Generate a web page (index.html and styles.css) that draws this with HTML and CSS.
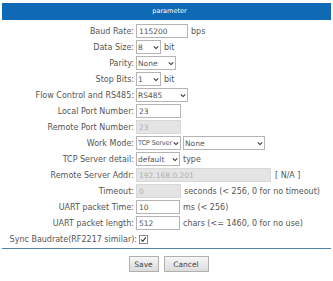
FILE: index.html
```html
<!DOCTYPE html>
<html lang="en">
<head>
  <meta charset="UTF-8" />
  <title>parameter</title>
  <link rel="stylesheet" href="styles.css">
</head>
<body>

<div class="title-bar">parameter</div>

<form class="params">
  <div class="grid">
    <label>Baud Rate:</label>
    <div class="cell"><input type="text" class="w52" value="115200"><span>bps</span></div>

    <label>Data Size:</label>
    <div class="cell">
      <span class="sel w25"><select><option>8</option></select><svg viewBox="0 0 8 5"><path d="M1 1 L4 4 L7 1"/></svg></span>
      <span>bit</span>
    </div>

    <label>Parity:</label>
    <div class="cell">
      <span class="sel w40"><select><option>None</option></select><svg viewBox="0 0 8 5"><path d="M1 1 L4 4 L7 1"/></svg></span>
    </div>

    <label>Stop Bits:</label>
    <div class="cell">
      <span class="sel w25"><select><option>1</option></select><svg viewBox="0 0 8 5"><path d="M1 1 L4 4 L7 1"/></svg></span>
      <span>bit</span>
    </div>

    <label>Flow Control and RS485:</label>
    <div class="cell">
      <span class="sel w52"><select><option>RS485</option></select><svg viewBox="0 0 8 5"><path d="M1 1 L4 4 L7 1"/></svg></span>
    </div>

    <label>Local Port Number:</label>
    <div class="cell"><input type="text" class="w45" value="23"></div>

    <label>Remote Port Number:</label>
    <div class="cell"><input type="text" class="w45" value="23" disabled></div>

    <label>Work Mode:</label>
    <div class="cell mode">
      <span class="sel w45 tight"><select><option>TCP Server</option></select><svg viewBox="0 0 8 5"><path d="M1 1 L4 4 L7 1"/></svg></span>
      <span class="sel w82"><select><option>None</option></select><svg viewBox="0 0 8 5"><path d="M1 1 L4 4 L7 1"/></svg></span>
    </div>

    <label>TCP Server detail:</label>
    <div class="cell">
      <span class="sel w44"><select><option>default</option></select><svg viewBox="0 0 8 5"><path d="M1 1 L4 4 L7 1"/></svg></span>
      <span>type</span>
    </div>

    <label>Remote Server Addr:</label>
    <div class="cell"><input type="text" class="w135" value="192.168.0.201" disabled><span class="na">[ N/A ]</span></div>

    <label>Timeout:</label>
    <div class="cell"><input type="text" class="w45" value="0" disabled><span>seconds (&lt; 256, 0 for no timeout)</span></div>

    <label>UART packet Time:</label>
    <div class="cell"><input type="text" class="w44" value="10"><span>ms (&lt; 256)</span></div>

    <label>UART packet length:</label>
    <div class="cell"><input type="text" class="w44" value="512"><span>chars (&lt;= 1460, 0 for no use)</span></div>

    <label class="wide">Sync Baudrate(RF2217 similar):</label>
    <div class="cell">
      <span class="check"><svg viewBox="0 0 9 9"><path d="M1.5 4.5 L3.5 6.8 L7.5 1.8"/></svg></span>
    </div>
  </div>

  <div class="actions">
    <button type="button" class="btn save">Save</button>
    <button type="button" class="btn cancel">Cancel</button>
  </div>
</form>

</body>
</html>
```

FILE: styles.css
```css
body {
  margin: 0;
  font-family: 'DejaVu Sans', Verdana, sans-serif;
  font-size: 8px;
  color: #555;
  background: #fff;
}

.title-bar {
  margin: 3px 2px 0;
  height: 17px;
  line-height: 17px;
  background: #1069b4;
  color: #fff;
  text-align: center;
  font-size: 6.5px;
  padding-left: 6px;
}

.params {
  margin: 3px 2px 0;
}

.grid {
  display: grid;
  grid-template-columns: 133px 1fr;
  grid-auto-rows: 16px;
  align-items: center;
  border-bottom: 1px solid #4d83ac;
  padding-bottom: 1px;
}

.grid label {
  text-align: right;
  padding-right: 1px;
  white-space: nowrap;
}

.grid label.wide {
  margin-right: -3px;
}

.cell {
  display: flex;
  align-items: center;
  gap: 3px;
  padding-left: 1px;
  white-space: nowrap;
}

.cell.mode {
  gap: 2px;
}

input[type="text"] {
  box-sizing: border-box;
  height: 14px;
  padding: 0 2px;
  border: 1px solid #b5b5b5;
  font-family: inherit;
  font-size: 7.5px;
  color: #555;
  background: #fff;
  margin: 0;
}

input[type="text"]:disabled {
  background: #e4e4e4;
  border-color: #d8d8d8;
  color: #b0b0b0;
}

.sel {
  box-sizing: border-box;
  display: inline-flex;
  align-items: center;
  height: 14px;
  border: 1px solid #b5b5b5;
  background: #fff;
}

.sel select {
  appearance: none;
  -webkit-appearance: none;
  border: none;
  background: transparent;
  font-family: inherit;
  font-size: 7.5px;
  color: #555;
  padding: 0 0 0 1px;
  margin: 0;
  flex: 1;
  min-width: 0;
  outline: none;
}

.sel.tight select {
  font-size: 6.6px;
  letter-spacing: -0.2px;
}

.sel svg {
  width: 6px;
  height: 5px;
  margin-right: 1px;
  flex-shrink: 0;
}

.sel svg path,
.check svg path {
  fill: none;
  stroke: #333;
  stroke-width: 1.4;
}

.w25 { width: 25px; }
.w40 { width: 40px; }
.w44 { width: 44px; }
.w45 { width: 45px; }
.w52 { width: 52px; }
.w82 { width: 82px; }
.w135 { width: 135px; }

.na {
  margin-left: 1px;
}

.check {
  box-sizing: border-box;
  display: inline-flex;
  width: 9px;
  height: 9px;
  margin-left: 3px;
  border: 1px solid #8a8a8a;
  background: #fff;
}

.check svg {
  width: 100%;
  height: 100%;
}

.actions {
  display: flex;
  justify-content: center;
  gap: 5px;
  margin-top: 7px;
  padding-left: 4px;
}

.btn {
  box-sizing: border-box;
  height: 16px;
  border: 1px solid #b0b0b0;
  background: linear-gradient(#f6f6f6, #dcdcdc);
  font-family: inherit;
  font-size: 7.5px;
  color: #444;
  padding: 0;
}

.save { width: 30px; }
.cancel { width: 45px; }
```
